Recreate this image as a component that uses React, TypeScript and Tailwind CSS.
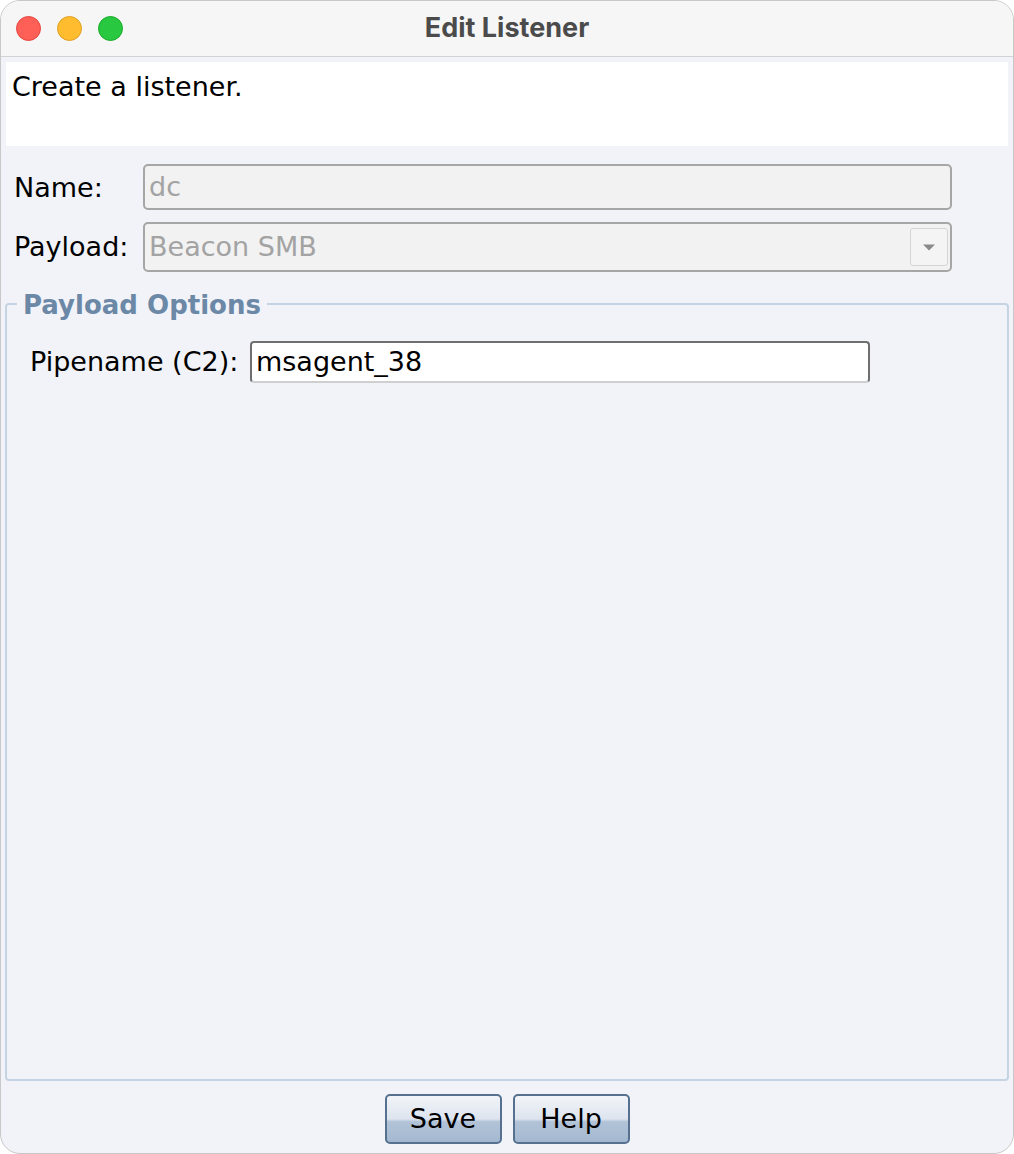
export default function App() {
  const font = { fontFamily: '"DejaVu Sans", "Noto Sans", sans-serif' };
  return (
    <div className="w-[1014px] h-[1154px] bg-white" style={font}>
      <div className="w-[1014px] h-[1154px] rounded-[20px] overflow-hidden bg-[#f1f3f8] flex flex-col border border-[#c8c8c8]">
        {/* title bar */}
        <div className="h-[56px] shrink-0 bg-[#f6f6f6] border-b border-[#d2d2d2] flex items-center relative">
          <div className="flex gap-[16px] pl-[15px]">
            <span className="w-[25px] h-[25px] rounded-full bg-[#fe5f57] border border-[#e2463f]" />
            <span className="w-[25px] h-[25px] rounded-full bg-[#febc2e] border border-[#dea123]" />
            <span className="w-[25px] h-[25px] rounded-full bg-[#28c840] border border-[#1aab29]" />
          </div>
          <div className="absolute inset-0 flex items-center justify-center text-[27px] font-bold text-[#4b4b4b]" style={{ fontFamily: 'Inter, "Noto Sans", sans-serif' }}>
            Edit Listener
          </div>
        </div>

        {/* description */}
        <div className="mx-[5px] mt-[5px] h-[84px] bg-white px-[6px] pt-[5px] text-[27px] text-black">
          Create a listener.
        </div>

        {/* name / payload */}
        <div className="flex flex-col gap-[12px] mt-[18px] pl-[13px] pr-[61px]">
          <div className="flex items-center">
            <span className="w-[129px] pt-[2px] text-[27px] text-black">Name:</span>
            <div className="flex-1 h-[46px] bg-[#f2f2f2] border-2 border-[#a6a6a6] rounded-[5px] flex items-center px-[4px] text-[27px] text-[#a3a3a3]">
              dc
            </div>
          </div>
          <div className="flex items-center">
            <span className="w-[129px] text-[27px] text-black">Payload:</span>
            <div className="flex-1 h-[50px] bg-[#f2f2f2] border-2 border-[#a6a6a6] rounded-[5px] flex items-center justify-between pl-[4px] pr-[2px] text-[27px] text-[#a3a3a3]">
              <span>Beacon SMB</span>
              <span className="w-[38px] h-[38px] border border-[#d4d4d4] rounded-[3px] bg-[#f4f4f4] flex items-center justify-center">
                <svg width="12" height="7" viewBox="0 0 12 7">
                  <path d="M0 0.5 H12 L6 6.5 Z" fill="#8a8a8a" />
                </svg>
              </span>
            </div>
          </div>
        </div>

        {/* payload options */}
        <fieldset className="mx-[4px] mt-[15px] h-[794px] border-2 border-[#c6d3e3] rounded-[4px] px-[10px] pt-0">
          <legend className="px-[6px] leading-[30px] pt-[3px] text-[26px] font-bold text-[#6b88a6]">Payload Options</legend>
          <div className="flex items-center mt-[21px] pl-[13px]">
            <span className="w-[220px] text-[27px] text-black">Pipename (C2):</span>
            <div className="w-[620px] h-[42px] bg-white border-2 border-[#6f6f6f] border-b-[#cfcfcf] rounded-[4px] flex items-center px-[4px] text-[27px] text-black">
              msagent_38
            </div>
          </div>
        </fieldset>

        {/* buttons */}
        <div className="flex justify-center gap-[11px] mt-[13px]">
          {["Save", "Help"].map((b) => (
            <button
              key={b}
              className="w-[117px] h-[50px] rounded-[5px] border-2 border-[#56708f] bg-[linear-gradient(#f2f5f9_0%,#dde4ee_50%,#b2c3d8_56%,#a3b8d0_100%)] text-[27px] text-black flex items-center justify-center"
            >
              {b}
            </button>
          ))}
        </div>
      </div>
    </div>
  );
}
